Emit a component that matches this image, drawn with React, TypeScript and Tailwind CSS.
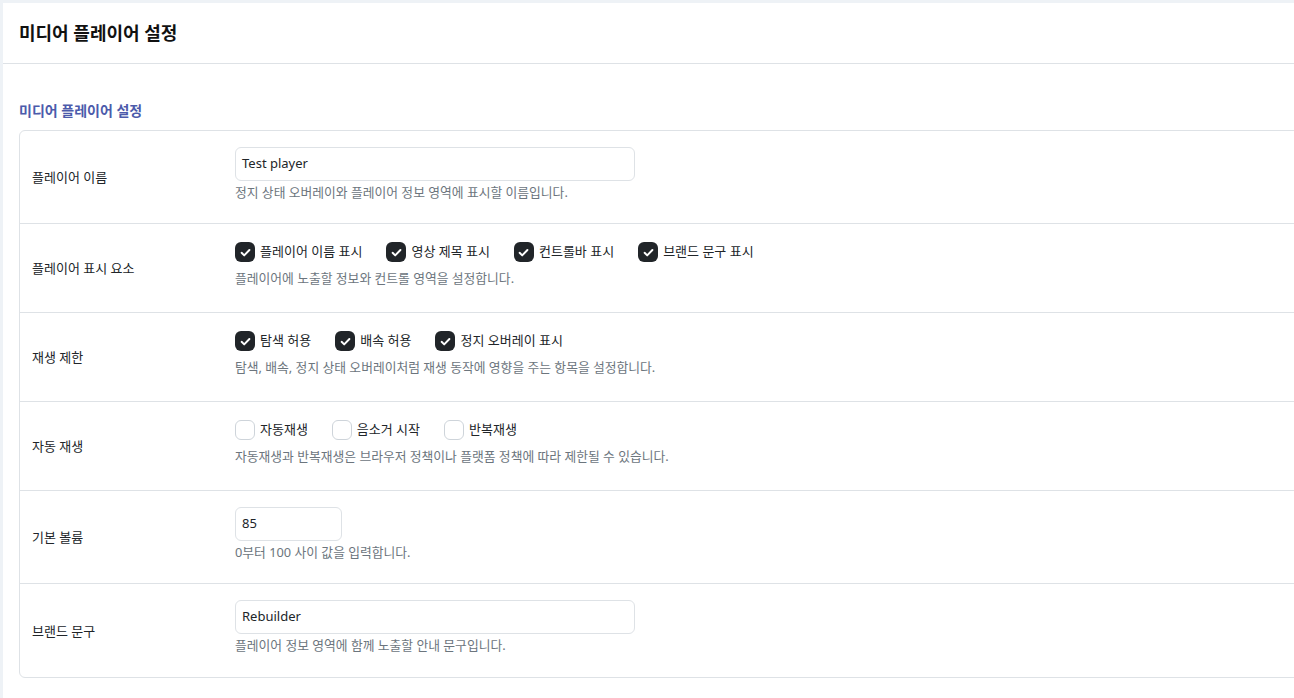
import React from "react";

const font = { fontFamily: '"Noto Sans", "Noto Sans CJK KR", sans-serif' };

const CheckBox = ({ checked, label }: { checked: boolean; label: string }) => (
  <label className="flex items-center gap-[5px] text-[13px] text-[#212529]">
    {checked ? (
      <span className="flex h-[20px] w-[20px] items-center justify-center rounded-[6px] bg-[#212529]">
        <svg width="13" height="13" viewBox="0 0 16 16" fill="none">
          <path
            d="M3.2 8.4l3.2 3.1 6.4-6.6"
            stroke="#fff"
            strokeWidth="2.4"
            strokeLinecap="round"
            strokeLinejoin="round"
          />
        </svg>
      </span>
    ) : (
      <span className="h-[20px] w-[20px] rounded-[6px] border border-[#ced4da] bg-white" />
    )}
    <span>{label}</span>
  </label>
);

const Help = ({ children }: { children: React.ReactNode }) => (
  <p className="mt-[2px] text-[12.8px] leading-[19px] text-[#6c757d]">{children}</p>
);

const TextInput = ({ value, width }: { value: string; width: string }) => (
  <div
    className={`flex h-[34px] items-center rounded-[6px] border border-[#dee2e6] bg-white px-[6px] text-[13px] text-[#212529] ${width}`}
  >
    {value}
  </div>
);

const Row = ({
  label,
  children,
  last,
  tall,
}: {
  label: string;
  children: React.ReactNode;
  last?: boolean;
  tall?: boolean;
}) => (
  <div
    className={`flex ${tall ? "h-[93px]" : "h-[89px]"} ${
      last ? "" : "border-b border-[#dee2e6]"
    }`}
  >
    <div className="flex w-[215px] items-center px-3 pt-[2px] text-[13px] text-[#212529]">
      {label}
    </div>
    <div className="pt-4">{children}</div>
  </div>
);

export default function App() {
  return (
    <div
      className="h-[698px] w-[1294px] overflow-hidden bg-[#eef2f6] pl-[3px] pt-[3px]"
      style={font}
    >
      <div className="h-[720px] w-[1330px] bg-white">
        {/* header */}
        <div className="flex h-[61px] items-center border-b border-[#dee2e6] px-4 pt-[1px]">
          <h1 className="text-[18px] font-bold text-[#111]">미디어 플레이어 설정</h1>
        </div>

        <div className="px-4 pt-[37px]">
          <h2 className="mb-[9px] text-[14px] font-semibold leading-5 text-[#4c5bab]">
            미디어 플레이어 설정
          </h2>

          <div className="rounded-[6px] border border-[#dee2e6]">
            <Row label="플레이어 이름" tall>
              <TextInput value="Test player" width="w-[400px]" />
              <Help>정지 상태 오버레이와 플레이어 정보 영역에 표시할 이름입니다.</Help>
            </Row>

            <Row label="플레이어 표시 요소">
              <div className="flex h-[24px] items-center gap-x-[24px]">
                <CheckBox checked label="플레이어 이름 표시" />
                <CheckBox checked label="영상 제목 표시" />
                <CheckBox checked label="컨트롤바 표시" />
                <CheckBox checked label="브랜드 문구 표시" />
              </div>
              <div className="mt-[5px]">
                <Help>플레이어에 노출할 정보와 컨트롤 영역을 설정합니다.</Help>
              </div>
            </Row>

            <Row label="재생 제한">
              <div className="flex h-[24px] items-center gap-x-[24px]">
                <CheckBox checked label="탐색 허용" />
                <CheckBox checked label="배속 허용" />
                <CheckBox checked label="정지 오버레이 표시" />
              </div>
              <div className="mt-[5px]">
                <Help>탐색, 배속, 정지 상태 오버레이처럼 재생 동작에 영향을 주는 항목을 설정합니다.</Help>
              </div>
            </Row>

            <Row label="자동 재생">
              <div className="flex h-[24px] items-center gap-x-[24px]">
                <CheckBox checked={false} label="자동재생" />
                <CheckBox checked={false} label="음소거 시작" />
                <CheckBox checked={false} label="반복재생" />
              </div>
              <div className="mt-[5px]">
                <Help>자동재생과 반복재생은 브라우저 정책이나 플랫폼 정책에 따라 제한될 수 있습니다.</Help>
              </div>
            </Row>

            <Row label="기본 볼륨" tall>
              <TextInput value="85" width="w-[107px]" />
              <Help>0부터 100 사이 값을 입력합니다.</Help>
            </Row>

            <Row label="브랜드 문구" tall last>
              <TextInput value="Rebuilder" width="w-[400px]" />
              <Help>플레이어 정보 영역에 함께 노출할 안내 문구입니다.</Help>
            </Row>
          </div>
        </div>
      </div>
    </div>
  );
}
